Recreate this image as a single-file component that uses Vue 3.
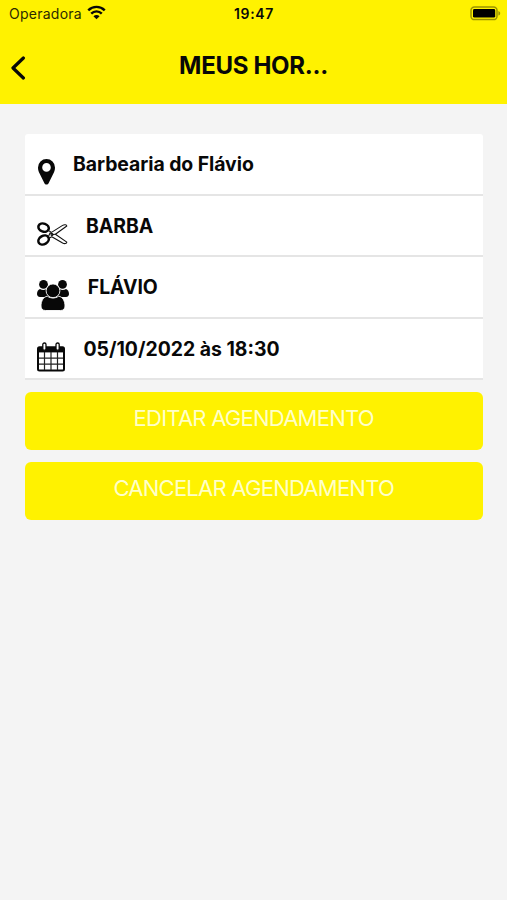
<template>
  <div class="screen">
    <header class="header">
      <div class="status-bar">
        <div class="carrier">
          <span>Operadora</span>
          <svg class="wifi" viewBox="0 0 18 14" width="19" height="15">
            <path d="M1.2 4.9C5.6.6 12.4.6 16.8 4.9" />
            <path d="M4 8C6.8 5.2 11.2 5.2 14 8" />
            <path class="dot" d="M9 13.4L6.1 10.5C7.7 8.9 10.3 8.9 11.9 10.5Z" />
          </svg>
        </div>
        <span class="clock">19:47</span>
        <svg class="battery" viewBox="0 0 31 15" width="31" height="15">
          <rect class="shell" x="1" y="1" width="26" height="12.6" rx="3.4" />
          <rect x="3" y="3" width="22.2" height="8.6" rx="1.4" />
          <path class="tip" d="M28.4 5C30.8 5.8 30.8 8.8 28.4 9.6Z" />
        </svg>
      </div>
      <div class="nav-bar">
        <svg class="back" viewBox="0 0 16 24" width="16" height="24">
          <path d="M13.4 2L3 12L13.4 22" />
        </svg>
        <h1 class="title">MEUS HOR...</h1>
      </div>
    </header>

    <main class="content">
      <ul class="list">
        <li v-for="item in items" :key="item.icon" class="item" :class="item.icon">
          <svg v-if="item.icon === 'pin'" class="icon" viewBox="0 0 17 26" width="17" height="26">
            <path fill-rule="evenodd" d="M8.5 0A8.5 8.5 0 0 0 0 8.5C0 11 .7 12.7 1.6 14.5L6.3 24C7.2 26 9.8 26 10.7 24L15.4 14.5C16.3 12.7 17 11 17 8.5A8.5 8.5 0 0 0 8.5 0ZM8.5 4.1A4.3 4.3 0 1 1 8.5 12.7A4.3 4.3 0 1 1 8.5 4.1Z" />
          </svg>

          <svg v-else-if="item.icon === 'scissors'" class="icon" viewBox="0 0 31 24" width="31" height="24">
            <g class="handle">
              <ellipse cx="6.6" cy="5.6" rx="5.3" ry="4" transform="rotate(20 6.6 5.6)" />
              <ellipse cx="6.6" cy="18" rx="5.5" ry="4.2" transform="rotate(-30 6.6 18)" />
            </g>
            <g class="blade">
              <path d="M11 8.3L14.5 10.4L25.6 3.4C27.5 2.2 29.6 2.7 29.8 4L18.4 12.2L29.8 20.1C29.6 21.8 27.5 22 25.6 21L14.8 14.7L11.5 16.6" />
              <path d="M11.3 14.8L13.2 10.8L16 12.5L18.4 12.2" />
              <circle cx="15" cy="12.5" r="1" />
            </g>
          </svg>

          <svg v-else-if="item.icon === 'group'" class="icon" viewBox="0 0 32 31" width="32" height="31">
            <circle cx="6.5" cy="4.4" r="4.4" />
            <circle cx="25.5" cy="4.4" r="4.4" />
            <path d="M3 9C5 10.2 7.5 10.2 9.5 9L13 17H3C1 17 0 15.5 0 14C0 11.5 1.2 9.6 3 9Z" />
            <path d="M29 9C27 10.2 24.5 10.2 22.5 9L19 17H29C31 17 32 15.5 32 14C32 11.5 30.8 9.6 29 9Z" />
            <g class="front">
              <path d="M10.3 16.2C14 18.6 18 18.6 21.7 16.2C25.7 16.8 28 21 28 26C28 28.9 26.4 30.5 23.5 30.5H8.5C5.6 30.5 4 28.9 4 26C4 21 6.3 16.8 10.3 16.2Z" />
              <circle cx="16" cy="10.8" r="6.9" />
            </g>
          </svg>

          <svg v-else class="icon" viewBox="0 0 28 30" width="28" height="30">
            <rect class="frame" x="1" y="5.3" width="26" height="23.3" rx="1.5" />
            <path d="M1 5H27V10.4H1Z" />
            <path class="grid" d="M2 16.1H26M2 22.2H26M7.5 10V28M14 10V28M20.5 10V28" />
            <rect class="ring" x="5.8" y="1" width="3.2" height="7.2" rx="1.5" />
            <rect class="ring" x="19" y="1" width="3.2" height="7.2" rx="1.5" />
          </svg>
          <span class="label">{{ item.text }}</span>
        </li>
      </ul>

      <button v-for="action in actions" :key="action" type="button" class="button">{{ action }}</button>
    </main>
  </div>
</template>

<script setup>
const items = [
  { icon: 'pin', text: 'Barbearia do Flávio' },
  { icon: 'scissors', text: 'BARBA' },
  { icon: 'group', text: 'FLÁVIO' },
  { icon: 'calendar', text: '05/10/2022 às 18:30' },
];

const actions = ['EDITAR AGENDAMENTO', 'CANCELAR AGENDAMENTO'];
</script>

<style>
body {
  margin: 0;
  background-color: #f4f4f4;
}
</style>

<style scoped>
.screen {
  min-height: 900px;
  background-color: #f4f4f4;
  color: #080808;
  font-family: Inter, "Liberation Sans", sans-serif;
}
.header {
  height: 103.5px;
  background-color: #fff200;
}
.status-bar {
  display: grid;
  grid-template-columns: 1fr auto 1fr;
  align-items: center;
  height: 27px;
  padding: 0 6px 0 9px;
  font-size: 14px;
}
.carrier {
  display: flex;
  align-items: center;
  gap: 5px;
  color: #2c2a00;
  letter-spacing: 0.25px;
}
.wifi {
  margin-top: -2px;
  fill: none;
  stroke: #080808;
  stroke-width: 2.3;
}
.wifi .dot {
  fill: #080808;
  stroke: none;
}
.clock {
  margin-right: 2px;
  font-weight: 600;
  letter-spacing: 0.7px;
}
.battery {
  justify-self: end;
}
.battery .shell {
  fill: none;
  stroke: #9b9300;
  stroke-width: 1.5;
}
.battery .tip {
  fill: #9b9300;
}
.nav-bar {
  display: grid;
  grid-template-columns: 40px 1fr 40px;
  align-items: center;
  height: 77px;
}
.back {
  margin: 5px 0 0 10px;
  fill: none;
  stroke: #080808;
  stroke-width: 3.2;
  stroke-linecap: round;
  stroke-linejoin: round;
}
.title {
  margin: 0;
  font-size: 24px;
  font-weight: 650;
  letter-spacing: -0.3px;
  text-align: center;
}
.content {
  padding: 30.5px 24.5px 0 25px;
}
.list {
  margin: 0 0 12px;
  padding: 0;
  list-style: none;
}
.item {
  display: flex;
  align-items: flex-start;
  box-sizing: border-box;
  height: 61.5px;
  padding-left: 12.5px;
  border-bottom: 2px solid #e5e5e5;
  background-color: #fff;
}
.item:first-child {
  border-radius: 3px 3px 0 0;
}
.icon {
  flex: none;
  margin-top: 25px;
  fill: #080808;
}
.scissors .icon {
  margin: 26.5px 0 0 -1px;
}
.group .icon {
  margin: 23px 0 0 -0.2px;
}
.calendar .icon {
  margin: 23px 0 0 -0.5px;
}
.label {
  margin: 18px 0 0 18.5px;
  font-size: 19.4px;
  font-weight: 650;
  letter-spacing: -0.05px;
  line-height: 24px;
  white-space: nowrap;
}
.calendar .label {
  letter-spacing: 0;
}
.handle {
  fill: none;
  stroke: #080808;
  stroke-width: 2.5;
}
.blade {
  fill: none;
  stroke: #111;
  stroke-width: 1.1;
  stroke-linejoin: round;
}
.front {
  stroke: #fff;
  stroke-width: 0.9;
}
.frame {
  fill: #fff;
  stroke: #080808;
  stroke-width: 2;
}
.grid {
  fill: none;
  stroke: #222;
  stroke-width: 1.2;
}
.ring {
  fill: #fff;
  stroke: #080808;
  stroke-width: 1.3;
}
.button {
  display: block;
  width: 100%;
  height: 58px;
  margin: 0 0 12px;
  padding: 0 0 6px;
  border: 0;
  border-radius: 6px;
  background-color: #fff200;
  color: #ffffc8;
  font-family: inherit;
  font-size: 22px;
  font-weight: 400;
  letter-spacing: -0.75px;
}
</style>
